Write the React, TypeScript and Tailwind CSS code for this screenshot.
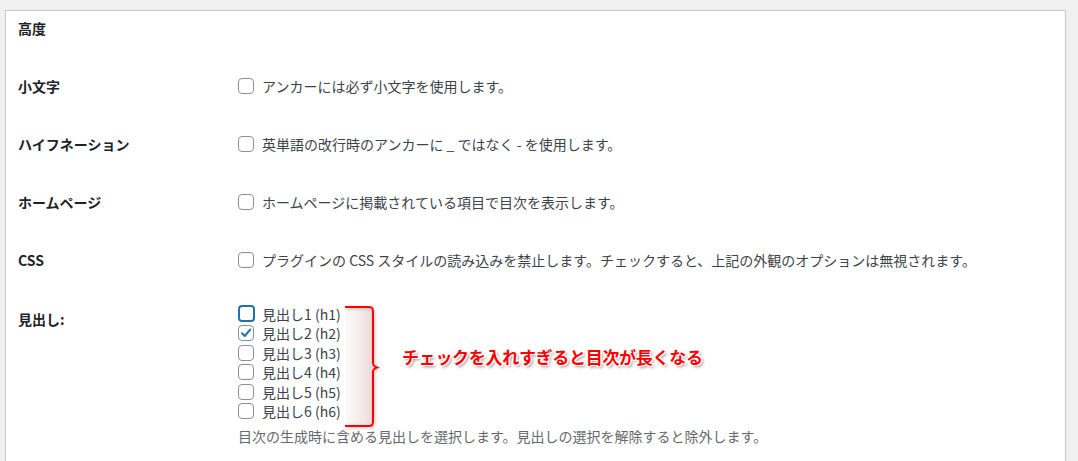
import React from 'react';

const font = { fontFamily: '"Noto Sans CJK JP", "Noto Sans", sans-serif' };

function Box({ checked = false, focused = false }: { checked?: boolean; focused?: boolean }) {
  return (
    <span
      className={
        focused
          ? 'flex h-[17px] w-[17px] shrink-0 items-center justify-center rounded-[4px] border-2 border-[#2271b1] bg-white'
          : 'flex h-[16px] w-[16px] shrink-0 items-center justify-center rounded-[4px] border border-[#8c8f94] bg-white'
      }
    >
      {checked && (
        <svg width="12" height="12" viewBox="0 0 12 12">
          <path d="M2 6.2 L4.8 9 L10.2 2.6" fill="none" stroke="#2271b1" strokeWidth="2" strokeLinecap="round" strokeLinejoin="round" />
        </svg>
      )}
    </span>
  );
}

const rows = [
  { label: '小文字', text: 'アンカーには必ず小文字を使用します。' },
  { label: 'ハイフネーション', text: '英単語の改行時のアンカーに _ ではなく - を使用します。' },
  { label: 'ホームページ', text: 'ホームページに掲載されている項目で目次を表示します。' },
  { label: 'CSS', text: 'プラグインの CSS スタイルの読み込みを禁止します。チェックすると、上記の外観のオプションは無視されます。' },
];

const headings = [1, 2, 3, 4, 5, 6];

export default function App() {
  return (
    <div className="h-[461px] w-[1078px] overflow-hidden bg-[#f0f0f1] pl-[5px] pt-[10px]" style={font}>
      <div className="h-[460px] w-[1061px] border-x border-t border-[#c8c8c8] bg-white pl-[12px] text-[14px] leading-[20px]">
        <div className="h-[46px] pt-[7px] font-bold text-[#1d2327]">高度</div>

        {rows.map(r => (
          <div key={r.label} className="flex h-[58px] items-center">
            <div className="w-[220px] font-bold text-[#1d2327]">{r.label}</div>
            <label className="flex items-center gap-[8px] text-[#3c434a]">
              <Box />
              <span>{r.text}</span>
            </label>
          </div>
        ))}

        <div className="flex">
          <div className="w-[220px] pt-[20px] font-bold text-[#1d2327]">見出し:</div>
          <div className="relative pt-[15px]">
            {headings.map(n => (
              <label key={n} className="flex h-[19.5px] items-center gap-[8px] text-[#3c434a]">
                <span className="flex w-[16px] justify-start">
                  <Box checked={n === 2} focused={n === 1} />
                </span>
                <span>見出し{n} (h{n})</span>
              </label>
            ))}
            <p className="mt-[5px] text-[#646970]">
              目次の生成時に含める見出しを選択します。見出しの選択を解除すると除外します。
            </p>

            {/* annotation */}
            <svg className="absolute left-[104px] top-[15px]" width="40" height="128" viewBox="0 0 40 128">
              <defs>
                <linearGradient id="sh" x1="0" x2="1" y1="0" y2="0">
                  <stop offset="0" stopColor="#f6eaea" stopOpacity="0.3" />
                  <stop offset="1" stopColor="#ead8d8" />
                </linearGradient>
                <filter id="ds" x="-20%" y="-10%" width="150%" height="130%">
                  <feDropShadow dx="1" dy="1" stdDeviation="1.5" floodColor="#888" floodOpacity="0.6" />
                </filter>
              </defs>
              <rect x="4" y="3" width="27" height="120" fill="url(#sh)" />
              <path
                d="M3 3 H27 Q31 3 31 7 V59 Q31 62 35 63.5 Q31 65 31 68 V118 Q31 122 27 122 H3"
                fill="none"
                stroke="#ff0000"
                strokeWidth="2"
                filter="url(#ds)"
              />
            </svg>
            <div
              className="absolute left-[164px] top-[58px] whitespace-nowrap text-[17px] font-bold tracking-[-0.3px] text-[#ff0000]"
              style={{
                textShadow:
                  '1px 0 0 #fff, -1px 0 0 #fff, 0 1px 0 #fff, 0 -1px 0 #fff, 1px 1px 0 #fff, -1px -1px 0 #fff, 1px -1px 0 #fff, -1px 1px 0 #fff, 2px 2px 3px rgba(0,0,0,0.45)',
              }}
            >
              チェックを入れすぎると目次が長くなる
            </div>
          </div>
        </div>
      </div>
    </div>
  );
}
